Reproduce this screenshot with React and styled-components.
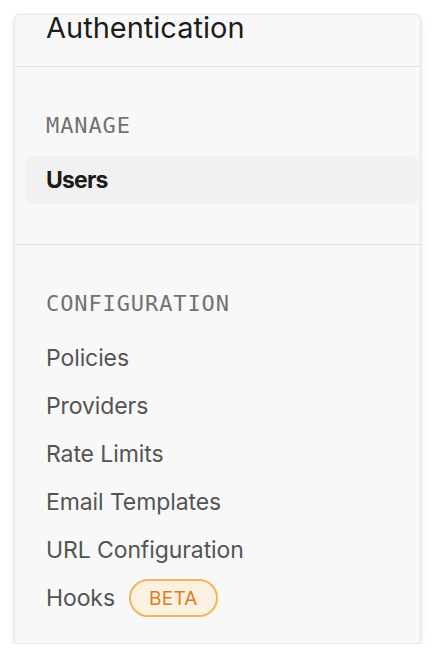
import styled, { createGlobalStyle } from "styled-components";

const GlobalStyle = createGlobalStyle`
  html, body {
    margin: 0;
    padding: 0;
    background: #ffffff;
  }
  body {
    font-family: "Inter", "Noto Sans", sans-serif;
  }
`;

const manage = [{ label: "Users", active: true }];

const configuration = [
  { label: "Policies" },
  { label: "Providers" },
  { label: "Rate Limits" },
  { label: "Email Templates" },
  { label: "URL Configuration" },
  { label: "Hooks", badge: "BETA" },
];

const App = () => {
  return (
    <>
      <GlobalStyle />
      <Page>
        <Panel>
          <Header>
            <Title>Authentication</Title>
          </Header>
          <Section $bottom={40}>
            <Label>MANAGE</Label>
            <List>
              {manage.map((item) => (
                <Item key={item.label} $active={item.active}>
                  {item.label}
                </Item>
              ))}
            </List>
          </Section>
          <Section $bottom={21}>
            <Label>CONFIGURATION</Label>
            <List>
              {configuration.map((item) => (
                <Item key={item.label} $active={item.active}>
                  {item.label}
                  {item.badge && <Badge>{item.badge}</Badge>}
                </Item>
              ))}
            </List>
          </Section>
        </Panel>
      </Page>
    </>
  );
};

const Page = styled.div`
  padding: 14px 15px 0 14px;
`;

const Panel = styled.nav`
  width: 407px;
  box-sizing: border-box;
  background: #f8f8f8;
  border: 1px solid #e6e6e6;
  border-radius: 6px 6px 2px 2px;
  box-shadow: 0 1px 4px rgba(0, 0, 0, 0.08), 0 2px 8px rgba(0, 0, 0, 0.04);
`;

const Header = styled.header`
  display: flex;
  align-items: flex-start;
  height: 51px;
  padding: 0 31px;
  border-bottom: 1px solid #e0e0e0;
`;

const Title = styled.h1`
  margin: -5px 0 0;
  font-size: 29px;
  line-height: 36px;
  font-weight: 400;
  color: #1c1c1c;
`;

const Section = styled.section`
  padding: 47px 1px ${(p) => p.$bottom}px 10px;
  & + & {
    border-top: 1px solid #e0e0e0;
  }
`;

const Label = styled.div`
  padding-left: 21px;
  font-family: "DejaVu Sans Mono", "Liberation Mono", monospace;
  font-size: 22px;
  line-height: 24px;
  letter-spacing: 0.9px;
  color: #727272;
  margin-bottom: 18px;
`;

const List = styled.ul`
  list-style: none;
  margin: 0;
  padding: 0;
`;

const Item = styled.li`
  display: flex;
  align-items: center;
  gap: 14px;
  height: 48px;
  padding-left: 21px;
  border-radius: 9px;
  font-size: 23px;
  font-weight: ${(p) => (p.$active ? 700 : 400)};
  letter-spacing: ${(p) => (p.$active ? "-0.8px" : "-0.1px")};
  color: ${(p) => (p.$active ? "#1c1c1c" : "#545454")};
  background: ${(p) => (p.$active ? "#f1f1f1" : "transparent")};
`;

const Badge = styled.span`
  display: inline-flex;
  align-items: center;
  height: 34px;
  padding: 0 18px;
  border: 2px solid #f3b55a;
  border-radius: 999px;
  background: #fcf0e3;
  color: #e07c18;
  font-size: 19px;
  font-weight: 400;
  letter-spacing: 0.3px;
`;

export default App;
